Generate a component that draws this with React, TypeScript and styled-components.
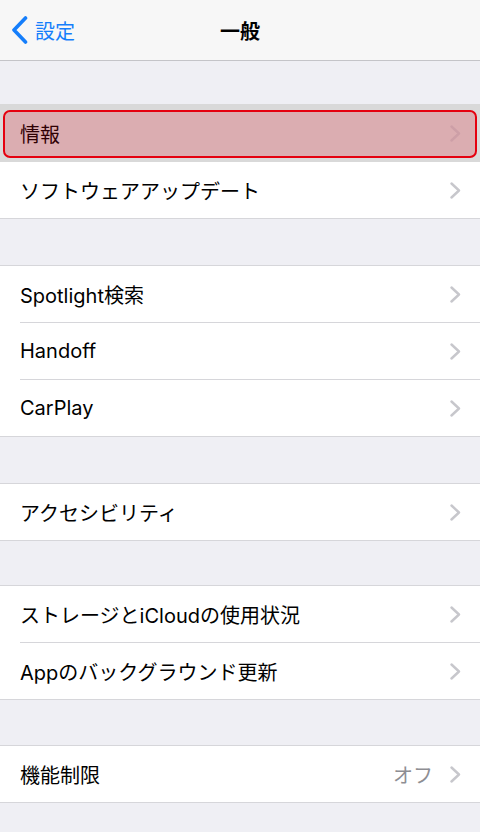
import React from "react";
import styled, { createGlobalStyle } from "styled-components";

const GlobalStyle = createGlobalStyle`
  html, body {
    margin: 0;
    padding: 0;
    background: #efeff4;
  }
  body {
    font-family: Inter, "Noto Sans CJK JP", sans-serif;
    -webkit-font-smoothing: antialiased;
  }
`;

const Page = styled.div`
  width: 480px;
  min-height: 832px;
  background: #efeff4;
  display: flex;
  flex-direction: column;
`;

const NavBar = styled.header`
  height: 60px;
  background: #f7f7f7;
  border-bottom: 1px solid #c4c4c8;
  display: grid;
  grid-template-columns: 1fr auto 1fr;
  align-items: center;
`;

const BackButton = styled.div`
  display: flex;
  align-items: center;
  gap: 7px;
  padding-left: 11px;
  color: #157efb;
  font-size: 20px;
`;

const Title = styled.div`
  font-size: 20px;
  font-weight: 700;
  color: #000;
`;

const Spacer = styled.div<{ $h: number }>`
  height: ${(p) => p.$h}px;
`;

const Group = styled.section`
  background: #fff;
  border-top: 1px solid #d6d6da;
  border-bottom: 1px solid #d6d6da;
`;

const Row = styled.div<{ $highlight?: boolean }>`
  position: relative;
  padding-left: 20px;
  background: ${(p) => (p.$highlight ? "#d9d9d9" : "#fff")};
  box-shadow: ${(p) => (p.$highlight ? "0 -1px 0 #d9d9d9, 0 1px 0 #d9d9d9" : "none")};
`;

const RowInner = styled.div<{ $last?: boolean; $highlight?: boolean }>`
  height: 56px;
  display: flex;
  align-items: center;
  padding-right: 19px;
  border-bottom: ${(p) =>
    p.$last ? "none" : `1px solid ${p.$highlight ? "#d9d9d9" : "#d6d6da"}`};
`;

const Label = styled.span`
  flex: 1;
  font-size: 20px;
  color: #000;
`;

const Detail = styled.span`
  font-size: 20px;
  color: #8e8e93;
  margin-right: 17px;
`;

const Marker = styled.div`
  position: absolute;
  left: 3px;
  right: 3px;
  top: 5px;
  bottom: 4px;
  border: 2px solid #e5000f;
  border-radius: 7px;
  background: rgba(230, 0, 18, 0.2);
  pointer-events: none;
`;

const BackChevron = () => (
  <svg width="17" height="28" viewBox="0 0 17 28" fill="none">
    <path
      d="M14.5 2 L3 14 L14.5 26"
      stroke="#157efb"
      strokeWidth="3.6"
      strokeLinecap="round"
      strokeLinejoin="round"
    />
  </svg>
);

const Chevron = () => (
  <svg width="11" height="17" viewBox="0 0 11 17" fill="none">
    <path
      d="M1.5 1.5 L9 8.5 L1.5 15.5"
      stroke="#c7c7cc"
      strokeWidth="2.4"
      strokeLinecap="round"
      strokeLinejoin="round"
    />
  </svg>
);

type Item = { label: string; detail?: string; highlight?: boolean };

const groups: { gap: number; items: Item[] }[] = [
  { gap: 43, items: [{ label: "情報", highlight: true }, { label: "ソフトウェアアップデート" }] },
  {
    gap: 46,
    items: [{ label: "Spotlight検索" }, { label: "Handoff" }, { label: "CarPlay" }],
  },
  { gap: 46, items: [{ label: "アクセシビリティ" }] },
  {
    gap: 44,
    items: [{ label: "ストレージとiCloudの使用状況" }, { label: "Appのバックグラウンド更新" }],
  },
  { gap: 45, items: [{ label: "機能制限", detail: "オフ" }] },
];

export default function App() {
  return (
    <Page>
      <GlobalStyle />
      <NavBar>
        <BackButton>
          <BackChevron />
          <span>設定</span>
        </BackButton>
        <Title>一般</Title>
        <div />
      </NavBar>
      {groups.map((g, gi) => (
        <React.Fragment key={gi}>
          <Spacer $h={g.gap} />
          <Group>
            {g.items.map((it, i) => (
              <Row key={it.label} $highlight={it.highlight}>
                <RowInner $last={i === g.items.length - 1} $highlight={it.highlight}>
                  <Label>{it.label}</Label>
                  {it.detail && <Detail>{it.detail}</Detail>}
                  <Chevron />
                </RowInner>
                {it.highlight && <Marker />}
              </Row>
            ))}
          </Group>
        </React.Fragment>
      ))}
    </Page>
  );
}
